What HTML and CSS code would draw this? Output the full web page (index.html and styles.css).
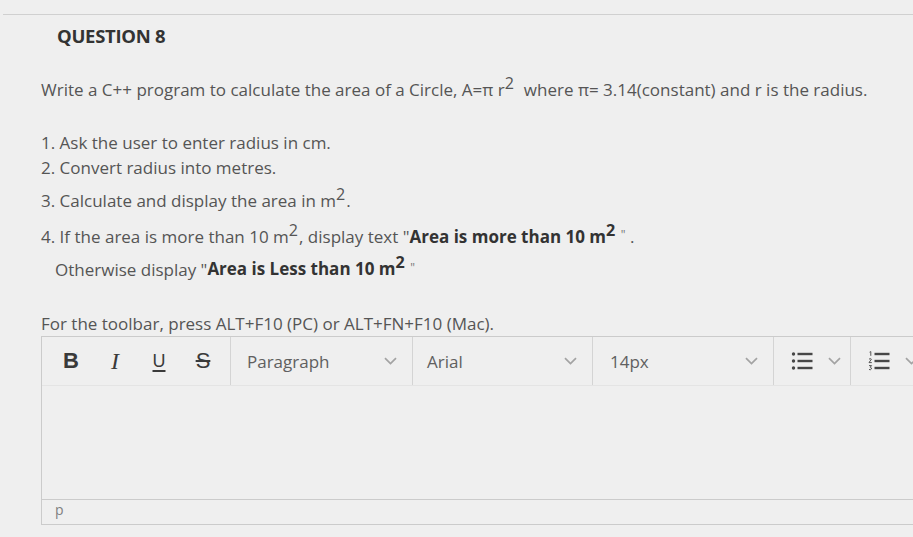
FILE: index.html
```html
<!DOCTYPE html>
<html>
<head>
<meta charset="utf-8">
<link rel="stylesheet" href="styles.css">
</head>
<body>
<div class="page">
  <div class="topline"></div>
  <h2 class="qtitle">QUESTION 8</h2>
  <p class="intro">Write a C++ program to calculate the area of a Circle, A=π r<sup>2</sup>&nbsp; where π= 3.14(constant) and r is the radius.</p>
  <div class="steps">
    <p class="step s1">1. Ask the user to enter radius in cm.</p>
    <p class="step s2">2. Convert radius into metres.</p>
    <p class="step s3">3. Calculate and display the area in m<sup>2</sup>.</p>
    <p class="step s4">4. If the area is more than 10 m<sup>2</sup>, display text "<b>Area is more than 10 m<sup>2</sup></b> <span class="q">"</span> .</p>
    <p class="step s5">Otherwise display "<b>Area is Less than 10 m<sup>2</sup></b> <span class="q">"</span></p>
  </div>
  <p class="hint">For the toolbar, press ALT+F10 (PC) or ALT+FN+F10 (Mac).</p>
  <div class="editor">
    <div class="toolbar">
      <div class="group fmt">
        <span class="tb tb-b">B</span>
        <span class="tb tb-i">I</span>
        <span class="tb tb-u">U</span>
        <span class="tb tb-s">S</span>
      </div>
      <div class="group sel sel-para"><span>Paragraph</span><svg class="chev" viewBox="0 0 13 8"><path d="M1 1.2 6.5 6.6 12 1.2" fill="none" stroke="#a3a3a3" stroke-width="1.7"/></svg></div>
      <div class="group sel sel-font"><span>Arial</span><svg class="chev" viewBox="0 0 13 8"><path d="M1 1.2 6.5 6.6 12 1.2" fill="none" stroke="#a3a3a3" stroke-width="1.7"/></svg></div>
      <div class="group sel sel-size"><span>14px</span><svg class="chev" viewBox="0 0 13 8"><path d="M1 1.2 6.5 6.6 12 1.2" fill="none" stroke="#a3a3a3" stroke-width="1.7"/></svg></div>
      <div class="group list">
        <svg class="licon" viewBox="0 0 22 20"><circle cx="2.5" cy="3" r="1.7" fill="#474747"/><circle cx="2.5" cy="10" r="1.7" fill="#474747"/><circle cx="2.5" cy="17" r="1.7" fill="#474747"/><rect x="6.5" y="1.8" width="15" height="2.4" fill="#474747"/><rect x="6.5" y="8.8" width="15" height="2.4" fill="#474747"/><rect x="6.5" y="15.8" width="15" height="2.4" fill="#474747"/></svg>
        <svg class="chev" viewBox="0 0 13 8"><path d="M1 1.2 6.5 6.6 12 1.2" fill="none" stroke="#a3a3a3" stroke-width="1.7"/></svg>
      </div>
      <div class="group list">
        <svg class="licon" viewBox="0 0 22 20"><path d="M1.6 1.2 2.8 0.6 V4.8" fill="none" stroke="#555" stroke-width="1"/><path d="M1 8.2 Q2.2 7 3.4 8.2 L1 11.6 H3.8" fill="none" stroke="#555" stroke-width="1"/><path d="M1 14.6 H3.6 L2.2 16.2 Q3.8 16.6 3.4 18 Q2.4 19.4 1 18.4" fill="none" stroke="#555" stroke-width="1"/><rect x="6.5" y="1.8" width="15" height="2.4" fill="#474747"/><rect x="6.5" y="8.8" width="15" height="2.4" fill="#474747"/><rect x="6.5" y="15.8" width="15" height="2.4" fill="#474747"/></svg>
        <svg class="chev" viewBox="0 0 13 8"><path d="M1 1.2 6.5 6.6 12 1.2" fill="none" stroke="#a3a3a3" stroke-width="1.7"/></svg>
      </div>
    </div>
    <div class="content"></div>
    <div class="status">p</div>
  </div>
</div>
</body>
</html>
```
FILE: styles.css
```css
* { box-sizing: border-box; }
html, body { margin: 0; padding: 0; }
body {
  background: #efefef;
  font-family: "Open Sans", "Noto Sans", sans-serif;
  color: #555;
  width: 913px;
  height: 537px;
  overflow: hidden;
}
.page { padding-top: 14px; }
.topline { height: 1px; background: #d0d0d0; margin-left: 3px; }
.qtitle {
  margin: 9px 0 0 57px;
  font-size: 18.5px;
  font-weight: 700;
  color: #333;
  letter-spacing: -0.3px;
  line-height: 24px;
}
.intro {
  margin: 29px 0 0 41px;
  font-size: 17px;
  line-height: 26px;
  white-space: nowrap;
}
sup { font-size: 0.95em; line-height: 0; vertical-align: 0.42em; margin-right: 1px; }
b { color: #333; }
.q { font-size: 0.7em; vertical-align: 0.3em; color: #777; }
.steps { margin-top: 27px; }
.step { margin: 0 0 0 41px; font-size: 17px; line-height: 25px; white-space: nowrap; }
.s2 { margin-top: 0; }
.s3 { margin-top: 8px; }
.s4 { margin-top: 9px; }
.s5 { margin: 6px 0 0 55px; }
.hint { margin: 30px 0 0 41px; font-size: 17px; line-height: 25px; white-space: nowrap; }
.editor {
  margin: 0 0 0 41px;
  border: 1px solid #cbcbcb;
  border-right: none;
  width: 880px;
  overflow: hidden;
}
.toolbar {
  display: flex;
  height: 49px;
  border-bottom: 1px solid #e4e4e4;
}
.group {
  display: flex;
  flex-shrink: 0;
  align-items: center;
  height: 100%;
  border-right: 1px solid #d4d4d4;
}
.fmt { width: 189px; padding-left: 7px; }
.tb { width: 44px; text-align: center; color: #3a3a3a; }
.tb-b { font-family: "Liberation Sans", Arial, sans-serif; font-weight: 700; font-size: 22px; }
.tb-i { font-family: "Liberation Serif", serif; font-style: italic; font-size: 24px; }
.tb-u { font-family: "Liberation Sans", sans-serif; font-size: 18px; text-decoration: underline; text-underline-offset: 3px; text-decoration-thickness: 2px; }
.tb-s { font-family: "Liberation Sans", sans-serif; font-size: 22px; text-decoration: line-through; text-decoration-thickness: 2px; }
.sel { justify-content: space-between; padding: 0 15px 0 16px; font-size: 17px; color: #606060; }
.sel-para { width: 182px; }
.sel-font { width: 180px; padding-left: 14px; }
.sel-size { width: 181px; padding-left: 17px; }
.chev { width: 13px; height: 8px; }
.list { width: 77px; padding-left: 17px; gap: 15px; }
.licon { width: 22px; height: 20px; }
.content { height: 114px; border-bottom: 1px solid #cbcbcb; }
.status { height: 24px; padding-left: 13px; font-size: 14px; line-height: 19px; color: #808080; }
```
